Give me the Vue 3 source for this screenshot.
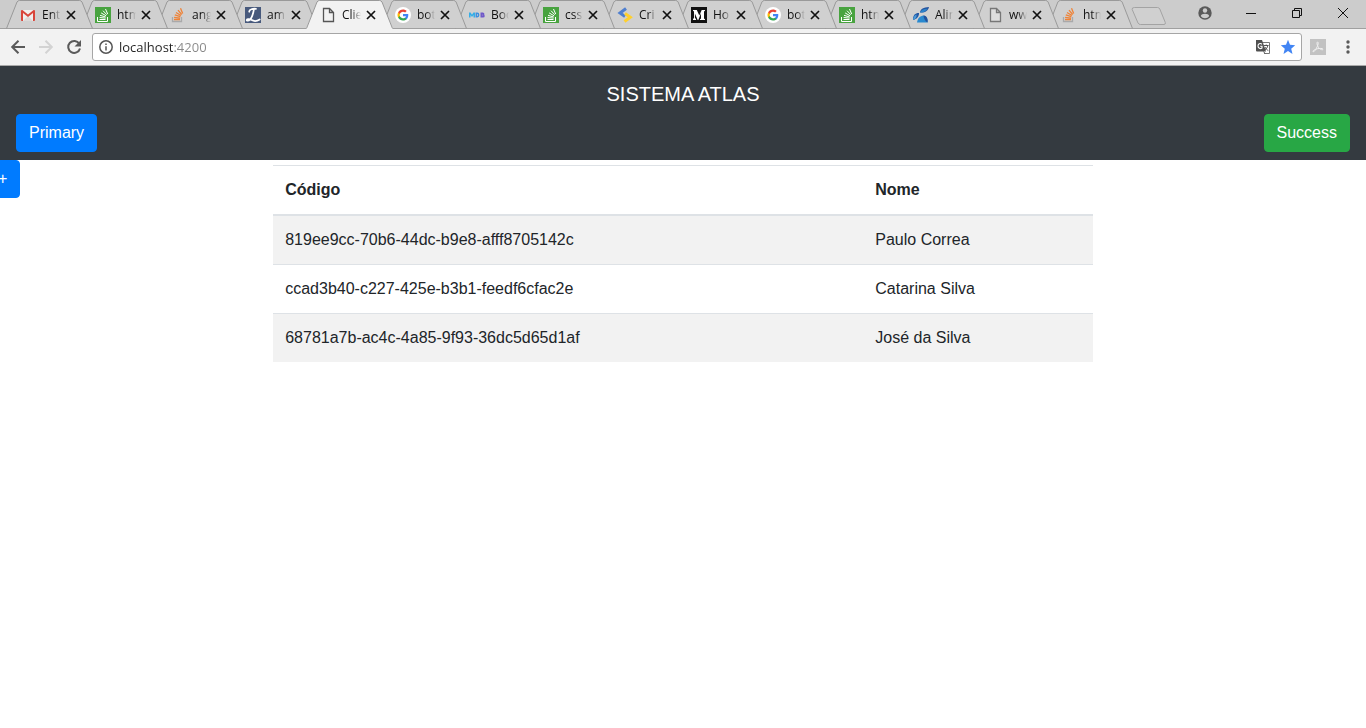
<script setup>
import { ref } from 'vue'

const tabs = [
  { icon: 'gmail', title: 'Ent' },
  { icon: 'so-pt', title: 'htm' },
  { icon: 'so', title: 'ang' },
  { icon: 'letter', title: 'am' },
  { icon: 'page', title: 'Clie', active: true },
  { icon: 'google', title: 'bot' },
  { icon: 'mdb', title: 'Boo' },
  { icon: 'so-pt', title: 'css' },
  { icon: 'chevrons', title: 'Cri' },
  { icon: 'medium', title: 'Ho' },
  { icon: 'google', title: 'bot' },
  { icon: 'so-pt', title: 'htm' },
  { icon: 'petals', title: 'Alin' },
  { icon: 'page', title: 'ww' },
  { icon: 'so', title: 'htm' },
]

const url = ref('localhost:4200')

const people = [
  { id: '819ee9cc-70b6-44dc-b9e8-afff8705142c', name: 'Paulo Correa' },
  { id: 'ccad3b40-c227-425e-b3b1-feedf6cfac2e', name: 'Catarina Silva' },
  { id: '68781a7b-ac4c-4a85-9f93-36dc5d65d1af', name: 'José da Silva' },
]
</script>

<template>
  <svg class="symbols" aria-hidden="true">
    <symbol id="i-gmail" viewBox="0 0 16 16">
      <rect x="1" y="3" width="14" height="11" rx="1" fill="#f1efee" />
      <path d="M3 14 8 9l5 5z" fill="#dcd9d8" />
      <path d="M1 4v9.2c0 .5.3.8.8.8H3V6l5 4 5-4v8h1.200c.5 0 .8-.3.8-.8V4c0-.8-1-1.300-1.700-.8L8 7.400 2.700 3.200C2 2.700 1 3.200 1 4z" fill="#d9463b" />
    </symbol>
    <symbol id="i-so-pt" viewBox="0 0 16 16">
      <rect width="16" height="16" fill="#48a33f" />
      <path d="M2.500 10v4.500h10V10M4.500 12.500h6M4.600 10.500l6 .6M5 8.300l5.700 1.700M6.100 5.900l5 2.900M8 3.700l3.900 4.100M10.500 2l2.200 5" fill="none" stroke="#fff" stroke-width="1" />
    </symbol>
    <symbol id="i-so" viewBox="0 0 16 16">
      <path d="M2.500 10v4.500h9V10" fill="none" stroke="#a9a9aa" stroke-width="1.300" />
      <path d="M4 12.500h6M4.100 10.300l6 .8M4.800 7.900l5.600 1.700M6 5.500l5 3M8 3.200l3.700 4.300M10.500 1.200l2.200 5.400" fill="none" stroke="#ef8236" stroke-width="1.300" />
    </symbol>
    <symbol id="i-letter" viewBox="0 0 16 16">
      <rect width="16" height="16" fill="#47597c" />
      <path d="M4.200 4.800C4 2.500 8 1.300 11 1.800M9 2C8.300 6 7.300 10.500 5 12.700c-1.500 1.400-3.500 1.300-3.300.3.500-1.500 3.300-.9 5 .1 2.300 1.300 5 1.300 8-.6" fill="none" stroke="#fff" stroke-width="1.700" stroke-linecap="round" />
    </symbol>
    <symbol id="i-page" viewBox="0 0 16 16">
      <path d="M3.500 1.500h6l4 4v9h-10zM9.500 1.500v4h4" fill="#f3f3f3" fill-opacity=".4" stroke="currentColor" stroke-width="1.300" />
    </symbol>
    <symbol id="i-google" viewBox="-4 -4 32 32">
      <circle cx="12" cy="12" r="16" fill="#fff" />
      <path d="M22.560 12.250c0-.78-.07-1.530-.2-2.250H12v4.260h5.920c-.26 1.370-1.040 2.530-2.210 3.310v2.770h3.570c2.080-1.920 3.280-4.740 3.280-8.090z" fill="#4285f4" />
      <path d="M12 23c2.970 0 5.460-.98 7.280-2.660l-3.570-2.770c-.98.66-2.230 1.060-3.710 1.060-2.860 0-5.290-1.930-6.160-4.530H2.180v2.840C3.990 20.530 7.700 23 12 23z" fill="#34a853" />
      <path d="M5.840 14.090c-.22-.66-.35-1.360-.35-2.090s.13-1.430.35-2.090V7.070H2.180C1.430 8.550 1 10.220 1 12s.43 3.450 1.180 4.930l2.850-2.220z" fill="#fbbc05" />
      <path d="M12 5.380c1.620 0 3.060.56 4.210 1.640l3.150-3.150C17.450 2.090 14.970 1 12 1 7.700 1 3.990 3.470 2.180 7.070l3.660 2.840c.87-2.600 3.300-4.530 6.160-4.530z" fill="#ea4335" />
    </symbol>
    <symbol id="i-mdb" viewBox="0 0 16 16">
      <path d="M0 5.500h1.600L3 7.800l1.400-2.300H6v5H4.500V8L3 10 1.500 8v2.500H0z" fill="#35aee8" />
      <path d="M7.300 6.300h1c1.800 0 1.800 3.400 0 3.400h-1z" fill="none" stroke="#3d8fe0" stroke-width="1.500" />
      <path d="M12.200 6.200h1.600c1.200 0 1.200 1.800 0 1.800h-1.600H14c1.400 0 1.400 1.800 0 1.800h-1.800z" fill="none" stroke="#6f58c9" stroke-width="1.400" />
    </symbol>
    <symbol id="i-chevrons" viewBox="0 0 16 16">
      <path d="M9 1.500 3 6l5 3.500" fill="none" stroke="#4f7fd0" stroke-width="3" />
      <path d="m8 6.500 5.300 3.700L7.500 14.500" fill="none" stroke="#ffd02e" stroke-width="3" />
    </symbol>
    <symbol id="i-medium" viewBox="0 0 16 16">
      <rect width="16" height="16" fill="#111" />
      <path d="M2 3h3.800l2.500 5.500L10.700 3H14v.8l-1 .8v6.900l1 .7v.8H9v-.8l1-.7V6.200L7.300 13h-.6L3.900 6.400v4.400l1.200 1.500v.7H2v-.7l1-1.500V4.600L2 3.700z" fill="#fff" />
    </symbol>
    <symbol id="i-petals" viewBox="0 0 16 16">
      <path d="M7 5.500C7.300 2 10.500.2 16 0c-.8 3.500-4 6-9 5.500z" fill="#25539d" />
      <path d="M7 5.500C8 3 11 1.500 14.500 1.800 13 4.500 10.500 5.800 7 5.500z" fill="#2a82cb" />
      <path d="M0 13C-.2 8.500 2 5.800 6 6c.3 3-2 6.300-6 7z" fill="#2358a4" />
      <path d="M0 13c.2-2.500 1.500-5 3.500-5.500C4 10 2.500 12.300 0 13z" fill="#4a9bd8" />
      <path d="M4 15.600c.6-4.200 3-6.600 6.500-7 3.500.6 4.500 3.500 4 7z" fill="#2989cf" />
      <path d="M14.500 15.600c.5-3.500-.5-6.400-4-7 .3 3 1.500 5.500 4 7z" fill="#23509a" />
    </symbol>
  </svg>

  <div class="window">
    <div class="tab-strip">
      <div class="tabs">
        <div
          v-for="(tab, i) in tabs"
          :key="i"
          class="tab"
          :class="{ active: tab.active }"
          :style="{ zIndex: tab.active ? 30 : 20 - i }"
        >
          <svg class="tab-shape" viewBox="0 0 87 29" preserveAspectRatio="none" aria-hidden="true">
            <path class="tab-fill" :d="tab.active ? 'M0 29 11 2Q12 .5 13.500 .5H73.500Q75 .5 76 2L87 29z' : 'M.5 28 11 2Q12 .5 13.500 .5H73.500Q75 .5 76 2L86.500 28z'" />
            <path class="tab-line" d="M.5 28.500 11 2Q12 .5 13.500 .5H73.500Q75 .5 76 2L86.500 28.500" />
          </svg>
          <svg class="favicon" aria-hidden="true"><use :href="'#i-' + tab.icon" /></svg>
          <span class="tab-title">{{ tab.title }}</span>
          <button class="tab-close" type="button" aria-label="Fechar guia">
            <svg viewBox="0 0 14 14" width="14" height="14"><path d="m3 3 8 8M11 3l-8 8" /></svg>
          </button>
        </div>
      </div>
      <button class="new-tab" type="button" aria-label="Nova guia">
        <svg viewBox="0 0 36 18" width="36" height="18">
          <path d="M3.500 .5h23q1.500 0 2.300 1.500l5.500 13.500q.5 2-1.300 2H9.500q-1.700 0-2.500-1.500L1.200 2.500q-.5-2 2.300-2z" />
        </svg>
      </button>
      <div class="captions">
        <button type="button" aria-label="Perfil">
          <svg viewBox="0 0 14 14" width="14" height="14">
            <circle cx="7" cy="7" r="6.700" fill="#5a5a5a" />
            <circle cx="7" cy="4.500" r="2.200" fill="#ccc" />
            <path d="M2.800 10c.4-3 8-3 8.400 0-2 3-6.400 3-8.400 0z" fill="#ccc" />
          </svg>
        </button>
        <button type="button" aria-label="Minimizar">
          <svg viewBox="0 0 10 10" width="10" height="10"><path d="M0 5.500h10" /></svg>
        </button>
        <button type="button" aria-label="Restaurar">
          <svg viewBox="0 0 10 10" width="10" height="10"><path d="M.5 2.500h7v7h-7zM2.500 2.500v-2h7v7h-2" /></svg>
        </button>
        <button type="button" aria-label="Fechar">
          <svg viewBox="0 0 10 10" width="10" height="10"><path d="m0 0 10 10M10 0 0 10" /></svg>
        </button>
      </div>
    </div>

    <div class="toolbar">
      <button class="nav-button" type="button" aria-label="Voltar">
        <svg viewBox="0 0 16 16" width="16" height="16"><path d="M15 8H2.500M8.500 1.700 2.200 8l6.300 6.300" /></svg>
      </button>
      <button class="nav-button disabled" type="button" aria-label="Avançar" disabled>
        <svg viewBox="0 0 16 16" width="16" height="16"><path d="M1 8h12.500M7.500 1.700 13.800 8l-6.300 6.300" /></svg>
      </button>
      <button class="nav-button" type="button" aria-label="Recarregar">
        <svg viewBox="0 0 16 16" width="16" height="16">
          <path d="M13.300 4.700A6 6 0 1 0 14 9.500" />
          <path class="solid" d="M15 1v6.500H8.500z" />
        </svg>
      </button>
      <div class="omnibox">
        <svg class="info" viewBox="0 0 14 14" width="14" height="14" aria-hidden="true">
          <circle cx="7" cy="7" r="6.200" /><path d="M7 6.200v4.300M7 3.400v1.500" />
        </svg>
        <input v-model="url" class="address" type="text" aria-label="Endereço" spellcheck="false" />
        <button type="button" aria-label="Traduzir">
          <svg viewBox="0 0 16 16" width="16" height="16">
            <path d="M7 3.500h7.500v11H9" fill="#fff" stroke="#777" />
            <path d="M1 1h6l4 11.500H2Q1 12.500 1 11.500z" fill="#505050" />
            <path d="M7 5.200C5 3.700 3 5 3 7s2.400 3.500 4 2V7.200H5.200" fill="none" stroke="#fff" stroke-width="1.100" />
            <path d="M9 6.500h4.500M11.200 5.500v1M12.800 6.500c-.3 2-1.500 3.500-2.800 4.500M10 8c.5 1.500 1.800 2.800 3.300 3.500M8.500 12.500l1.500 2" fill="none" stroke="#555" stroke-width="1" />
          </svg>
        </button>
        <button type="button" aria-label="Favorito">
          <svg viewBox="0 0 16 16" width="16" height="16">
            <path d="m8 .8 2 5 5.200.4-4 3.500 1.300 5.200L8 12.100l-4.500 2.800 1.300-5.200-4-3.500L6 5.800z" fill="#4285f4" />
          </svg>
        </button>
      </div>
      <button class="extension" type="button" aria-label="Adobe Acrobat">
        <svg viewBox="0 0 16 16" width="16" height="16">
          <rect width="16" height="16" fill="#c2c2c2" />
          <path d="M7.500 3c1.500 0 .5 3-.3 4.700-.9 2-2.700 5.300-4 5.100-1-.6 1.300-2.400 4-3 2.500-.6 5.600-.6 5.800.4.1 1.400-3.200.2-4.600-1.800C7 6.200 6.500 3.300 7.500 3z" fill="none" stroke="#f0f0f0" stroke-width="1" />
        </svg>
      </button>
      <button class="nav-button" type="button" aria-label="Menu">
        <svg viewBox="0 0 16 16" width="16" height="16">
          <g class="solid"><circle cx="8" cy="3" r="1.700" /><circle cx="8" cy="8" r="1.700" /><circle cx="8" cy="13" r="1.700" /></g>
        </svg>
      </button>
    </div>

    <header class="navbar">
      <h1 class="brand">SISTEMA ATLAS</h1>
      <div class="actions">
        <button class="btn primary" type="button">Primary</button>
        <button class="btn success" type="button">Success</button>
      </div>
    </header>

    <main class="content">
      <div class="side">
        <button class="btn primary add" type="button">+</button>
      </div>
      <table class="table">
        <thead>
          <tr><th class="code" scope="col">Código</th><th scope="col">Nome</th></tr>
        </thead>
        <tbody>
          <tr v-for="person in people" :key="person.id">
            <td>{{ person.id }}</td>
            <td>{{ person.name }}</td>
          </tr>
        </tbody>
      </table>
    </main>
  </div>
</template>

<style>
body {
  margin: 0;
  background: #fff;
  overflow-x: hidden;
}
</style>

<style scoped>
* {
  box-sizing: border-box;
}

button {
  margin: 0;
  padding: 0;
  border: 0;
  background: none;
  font: inherit;
}

svg {
  display: block;
  flex: none;
}

.symbols {
  position: absolute;
  width: 0;
  height: 0;
}

.window {
  font-family: "Liberation Sans", Arial, sans-serif;
  font-size: 16px;
  line-height: 24px;
  color: #212529;
}

/* Browser tabs */
.tab-strip {
  display: flex;
  height: 29px;
  padding-left: 6px;
  background: #ccc;
  box-shadow: inset 0 -1px #a0a0a0;
}

.tabs {
  display: flex;
  isolation: isolate;
}

.tab {
  position: relative;
  display: flex;
  align-items: center;
  width: 86px;
  height: 29px;
  padding: 1px 15px 0 14px;
  margin-right: -12px;
  color: #777;
}

.tab:nth-child(-n + 5) {
  width: 87px;
}

.tab.active {
  color: #555;
}

.tab-shape {
  position: absolute;
  inset: 0;
  width: 100%;
  height: 29px;
}

.tab-fill {
  fill: #d0d0d0;
}

.active .tab-fill {
  fill: #f2f2f2;
}

.tab-line {
  fill: none;
  stroke: #999;
}

.favicon {
  position: relative;
  width: 16px;
  height: 16px;
}

.tab-title {
  position: relative;
  flex: 1;
  min-width: 0;
  margin: 0 3px 0 6px;
  overflow: hidden;
  white-space: nowrap;
  font-family: "Open Sans", "Noto Sans", sans-serif;
  font-size: 12px;
  line-height: 16px;
  color: #111;
  mask-image: linear-gradient(to right, #000 50%, transparent);
}

.tab-close {
  position: relative;
}

.tab-close path {
  stroke: #111;
  stroke-width: 1.7;
}

.new-tab {
  align-self: flex-start;
  margin: 7px 0 0 10px;
}

.new-tab path {
  fill: #d0d0d0;
  stroke: #a3a3a3;
}

.captions {
  display: flex;
  height: 26px;
  margin-left: auto;
}

.captions button {
  display: grid;
  place-items: center;
  width: 46px;
}

.captions path {
  fill: none;
  stroke: #111;
}

.captions path[fill] {
  fill: #ccc;
  stroke: none;
}

/* Browser toolbar */
.toolbar {
  display: flex;
  align-items: center;
  height: 37px;
  padding: 0 4px;
  background: #f2f2f2;
  border-bottom: 1px solid #a9a9a9;
}

.nav-button {
  display: grid;
  place-items: center;
  width: 28px;
  height: 28px;
}

.nav-button path {
  fill: none;
  stroke: #5a5a5a;
  stroke-width: 2;
}

.nav-button .solid {
  fill: #5a5a5a;
  stroke: none;
}

.nav-button.disabled path {
  stroke: #d3d3d3;
}

.omnibox {
  display: flex;
  align-items: center;
  gap: 9px;
  flex: 1;
  min-width: 0;
  height: 28px;
  margin-left: 4px;
  padding: 0 5px 0 6px;
  border: 1px solid #a6a6a6;
  border-radius: 3px;
  background: #fff;
}

.info {
  fill: none;
  stroke: #555;
  stroke-width: 1.5;
}

.address {
  flex: 1;
  min-width: 0;
  margin: 0 0 0 -3px;
  padding: 0;
  border: 0;
  outline: 0;
  font-family: "Open Sans", "Noto Sans", sans-serif;
  font-size: 13px;
  line-height: 20px;
  /* host in dark, port in grey */
  color: transparent;
  caret-color: #222;
  background: linear-gradient(to right, #222 54px, #888 54px);
  background-clip: text;
}

.extension {
  display: grid;
  place-items: center;
  width: 32px;
  height: 28px;
}

/* Page */
.navbar {
  padding: 8px 16px;
  background: #343a40;
}

.brand {
  margin: 0;
  padding: 5px 0;
  font-size: 20px;
  font-weight: 400;
  line-height: 30px;
  text-align: center;
  color: #fff;
}

.actions {
  display: flex;
  justify-content: space-between;
}

.btn {
  padding: 6px 12px;
  border: 1px solid transparent;
  border-radius: 4px;
  line-height: 24px;
  color: #fff;
}

.primary {
  background: #007bff;
  border-color: #007bff;
}

.success {
  background: #28a745;
  border-color: #28a745;
}

.content {
  display: flex;
  align-items: flex-start;
}

.side {
  display: flex;
  flex: 0 0 20%;
}

.add {
  margin-left: -15px;
}

.table {
  width: 60%;
  margin-top: 5px;
  border-collapse: collapse;
}

.table th,
.table td {
  padding: 12px;
  border-top: 1px solid #dee2e6;
  text-align: left;
}

.table th {
  border-bottom: 2px solid #dee2e6;
}

.code {
  width: 72%;
}

.table tbody tr:nth-child(odd) {
  background: #f2f2f2;
}
</style>
